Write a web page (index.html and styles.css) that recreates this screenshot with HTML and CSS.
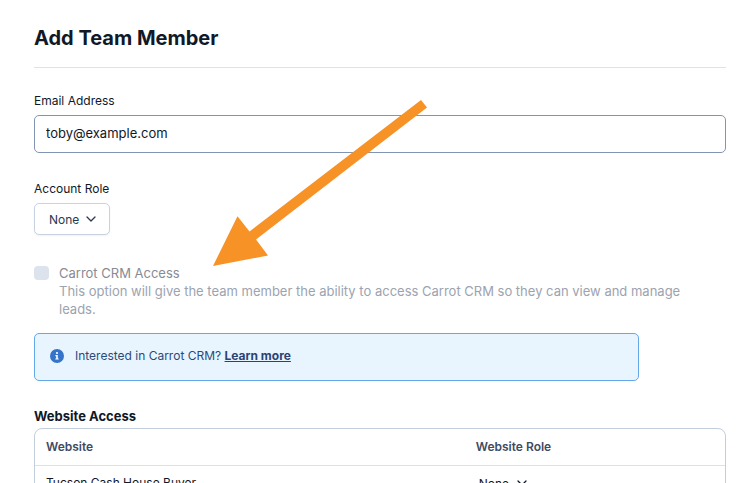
FILE: index.html
```html
<!DOCTYPE html>
<html lang="en">

<head>
    <title>Add Team Member</title>
    <meta charset="UTF-8">
    <meta name="viewport" content="width=device-width, initial-scale=1.0">
    <link rel="stylesheet" href="styles.css">
</head>

<body>
    <main class="page">
        <h1>Add Team Member</h1>

        <form>
            <div class="field">
                <label for="email">Email Address</label>
                <input id="email" class="text-input" type="email" value="toby@example.com">
            </div>

            <div class="field">
                <label for="role">Account Role</label>
                <div class="select">
                    <select id="role">
                        <option>None</option>
                    </select>
                    <svg class="chevron" viewBox="0 0 10 6"><path d="M1 1l4 4 4-4"/></svg>
                </div>
            </div>

            <div class="crm">
                <input id="crm" type="checkbox" aria-describedby="crm-help" disabled>
                <div class="crm-text">
                    <label for="crm">Carrot CRM Access</label>
                    <p id="crm-help">This option will give the team member the ability to access Carrot CRM so they can view and manage leads.</p>
                </div>
            </div>

            <div class="notice">
                <svg class="info" viewBox="0 0 14 14">
                    <circle cx="7" cy="7" r="7" fill="#3574c8"/>
                    <circle cx="7" cy="4" r="1.1" fill="#fff"/>
                    <path d="M5.4 6h2.4v3.4h.9v1.2H5.3V9.4h.9V7.2h-.8z" fill="#fff"/>
                </svg>
                <p>Interested in Carrot CRM? <a href="#">Learn more</a></p>
            </div>

            <h2>Website Access</h2>
            <div class="table-box">
                <table>
                    <thead>
                        <tr>
                            <th class="site">Website</th>
                            <th>Website Role</th>
                        </tr>
                    </thead>
                    <tbody>
                        <tr>
                            <td>Tucson Cash House Buyer</td>
                            <td>
                                <div class="select plain">
                                    <select aria-label="Website Role">
                                        <option>None</option>
                                    </select>
                                    <svg class="chevron" viewBox="0 0 10 6"><path d="M1 1l4 4 4-4"/></svg>
                                </div>
                            </td>
                        </tr>
                    </tbody>
                </table>
            </div>
        </form>

        <svg class="arrow" viewBox="0 0 214 166">
            <path d="M0 166L24.5 116.3L36.5 131.5L208 0L214 7.5L43 139.5L55 155.5z"/>
        </svg>
    </main>
</body>

</html>
```

FILE: styles.css
```css
* {
    box-sizing: border-box;
}

html {
    overflow: hidden;
}

body {
    margin: 0;
    background: #ffffff;
    color: #111827;
    font-family: Inter, "Liberation Sans", sans-serif;
    font-size: 12px;
    line-height: 18px;
}

.page {
    position: relative;
    padding: 24px 23px 24px 34px;
}

h1 {
    margin: 0 0 24px;
    padding-bottom: 15px;
    border-bottom: 1px solid #dbe3ee;
    font-size: 20px;
    line-height: 28px;
    font-weight: 700;
}

h2 {
    margin: 27px 0 3px;
    font-size: 13px;
    line-height: 17px;
    font-weight: 700;
}

p {
    margin: 0;
}

label {
    display: block;
}

input,
select {
    font-family: inherit;
    color: inherit;
}

.field {
    margin-bottom: 27px;
}

.field label {
    margin-bottom: 5px;
}

.text-input {
    display: block;
    width: 100%;
    height: 38px;
    padding: 0 11px 2px;
    border: 1px solid #8195b2;
    border-radius: 5px;
    background: #ffffff;
    font-size: 13px;
}

.select {
    position: relative;
    width: 76px;
    color: #2b3750;
}

.select select {
    appearance: none;
    display: block;
    width: 100%;
    height: 32px;
    padding: 0 14px;
    border: 1px solid #c8d2e0;
    border-radius: 5px;
    background: #ffffff;
    box-shadow: 0 1px 2px rgba(17, 24, 39, 0.06);
    font-size: 12px;
}

.chevron {
    position: absolute;
    right: 14px;
    top: 50%;
    width: 10px;
    height: 6px;
    margin-top: -3px;
    fill: none;
    stroke: currentColor;
    stroke-width: 1.3;
    stroke-linecap: round;
    stroke-linejoin: round;
    pointer-events: none;
}

.select.plain {
    width: 52px;
    margin-left: 3px;
    color: #111827;
}

.plain select {
    height: 18px;
    padding: 0;
    border: 0;
    box-shadow: none;
}

.plain .chevron {
    right: 4px;
}

.crm {
    display: flex;
    gap: 10px;
    margin: 29px 0 15px;
    color: #9ca3af;
    font-size: 13px;
}

.crm input {
    appearance: none;
    flex: none;
    width: 15px;
    height: 14px;
    margin: 2px 0 0;
    border-radius: 4px;
    background: #dce3ed;
}

.crm-text {
    max-width: 640px;
}

.crm label {
    color: #888b93;
}

.notice {
    display: flex;
    align-items: center;
    gap: 11px;
    max-width: 605px;
    height: 48px;
    padding: 0 15px 2px;
    border: 1px solid #63a8e8;
    border-radius: 5px;
    background: #e8f5fe;
    color: #2a4a7b;
}

.notice a {
    color: #2a4373;
    font-weight: 700;
}

.info {
    width: 14px;
    height: 14px;
}

.table-box {
    border: 1px solid #c2cedc;
    border-radius: 8px;
}

table {
    width: 100%;
    border-collapse: collapse;
}

th,
td {
    padding: 8px 11px;
    text-align: left;
}

th {
    padding: 9px 11px;
    border-bottom: 1px solid #dbe1ea;
    color: #414b5f;
    font-weight: 600;
}

.site {
    width: 62%;
}

th + th,
td + td {
    padding-left: 13px;
}

.arrow {
    position: absolute;
    left: 213px;
    top: 100px;
    width: 214px;
    height: 166px;
    fill: #f79226;
}
```
